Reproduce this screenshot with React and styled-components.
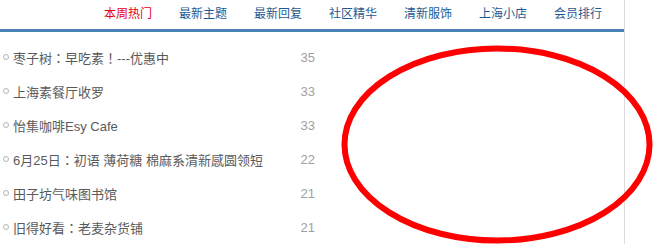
import React from "react";
import styled, { createGlobalStyle } from "styled-components";

const GlobalStyle = createGlobalStyle`
  body {
    margin: 0;
    background: #fff;
    font-family: "Liberation Sans", "Noto Sans CJK TC", sans-serif;
  }
`;

const Page = styled.div`
  position: relative;
  width: 653px;
  height: 244px;
  overflow: hidden;
`;

const Panel = styled.div`
  width: 624px;
  height: 244px;
  border-right: 1px solid #dcdcdc;
`;

const Nav = styled.ul`
  display: flex;
  justify-content: flex-end;
  gap: 27px;
  margin: 0;
  padding: 0 22px 0 0;
  height: 29px;
  list-style: none;
  border-bottom: 3px solid #4a7fb8;
`;

const NavItem = styled.li`
  font-size: 12px;
  line-height: 29px;
  font-family: "Liberation Sans", "Noto Sans CJK SC", sans-serif;
  color: ${(p) => (p.active ? "#e60012" : "#1d5a91")};
`;

const List = styled.ul`
  width: 315px;
  margin: 0;
  padding: 8px 0 0;
  list-style: none;
`;

const Row = styled.li`
  display: flex;
  align-items: center;
  height: 34px;
  font-size: 13px;
  color: #5a5a5a;
`;

const Dot = styled.span`
  width: 4px;
  height: 4px;
  margin: 0 4px 0 3px;
  border: 1px solid #b5b5b5;
  border-radius: 50%;
`;

const Title = styled.span`
  flex: 1;
`;

const Count = styled.span`
  color: #a0a0a0;
`;

const Mark = styled.svg`
  position: absolute;
  left: 341px;
  top: 45px;
`;

const navs = ["本周热门", "最新主题", "最新回复", "社区精华", "清新服饰", "上海小店", "会员排行"];

const topics = [
  ["枣子树：早吃素！---优惠中", 35],
  ["上海素餐厅收罗", 33],
  ["怡集咖啡Esy Cafe", 33],
  ["6月25日：初语 薄荷糖 棉麻系清新感圆领短", 22],
  ["田子坊气味图书馆", 21],
  ["旧得好看：老麦杂货铺", 21],
];

export default function App() {
  return (
    <Page>
      <GlobalStyle />
      <Panel>
        <Nav>
          {navs.map((n, i) => (
            <NavItem key={n} active={i === 0}>
              {n}
            </NavItem>
          ))}
        </Nav>
        <List>
          {topics.map(([t, c]) => (
            <Row key={t}>
              <Dot />
              <Title>{t}</Title>
              <Count>{c}</Count>
            </Row>
          ))}
        </List>
      </Panel>
      <Mark width="312" height="199" viewBox="0 0 312 199">
        <ellipse cx="156" cy="99.5" rx="152.5" ry="96" fill="none" stroke="#f00" strokeWidth="6" />
      </Mark>
    </Page>
  );
}
